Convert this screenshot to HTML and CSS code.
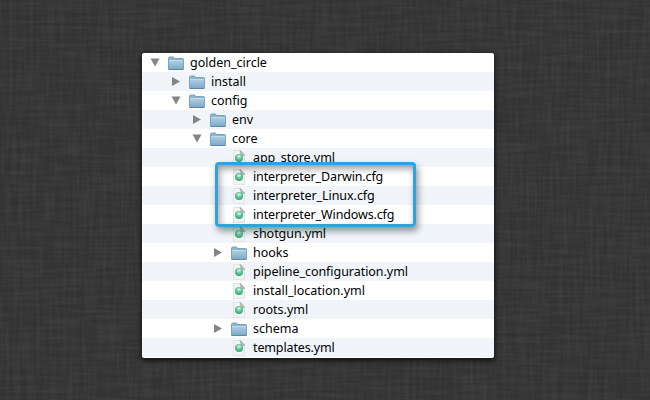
FILE: index.html
```html
<!DOCTYPE html>
<html lang="en">
<head>
<meta charset="utf-8">
<title>golden_circle</title>
<link rel="stylesheet" href="styles.css">
</head>
<body>
<svg class="linen" width="650" height="400" aria-hidden="true">
  <defs>
    <filter id="warp" x="0" y="0" width="100%" height="100%" color-interpolation-filters="sRGB">
      <feTurbulence type="fractalNoise" baseFrequency="0.3 0.022" numOctaves="2" seed="4"/>
      <feColorMatrix values="0 0 0 0 1  0 0 0 0 1  0 0 0 0 1  .08 0 0 0 -.027"/>
    </filter>
    <filter id="weft" x="0" y="0" width="100%" height="100%" color-interpolation-filters="sRGB">
      <feTurbulence type="fractalNoise" baseFrequency="0.022 0.3" numOctaves="2" seed="9"/>
      <feColorMatrix values="0 0 0 0 1  0 0 0 0 1  0 0 0 0 1  .08 0 0 0 -.027"/>
    </filter>
    <linearGradient id="blue" x1="0" y1="0" x2="0" y2="1"><stop offset="0" stop-color="#b4d0e2"/><stop offset="1" stop-color="#7cabca"/></linearGradient>
    <radialGradient id="green" cx=".5" cy=".35" r=".65"><stop offset="0" stop-color="#b5e6cb"/><stop offset=".5" stop-color="#62c79a"/><stop offset="1" stop-color="#2fa672"/></radialGradient>
    <symbol id="folder" viewBox="0 0 16 14">
      <path d="M.5 13V2.5Q.5 1 2 1H5Q6.2 1 6.5 2.5H14.5Q15.5 2.5 15.5 3.5V13Z" fill="#8bb4ce" stroke="#7ba3be"/>
      <path d="M1 4H15V13H1Z" fill="url(#blue)"/>
      <path d="M1 4.5H15" stroke="#c3dae8"/>
      <path d="M.5 13.5H15.5" stroke="#5b86a4"/>
    </symbol>
    <symbol id="file" viewBox="0 0 12 16">
      <path d="M.5.5H7.5L11.5 5V15.5H.5Z" fill="#f3f3f3" stroke="#e2e3e4"/>
      <path d="M6.5 0H7.5L12 5V6H8Z" fill="#b4b4b6"/>
      <circle cx="6" cy="7.9" r="4" fill="url(#green)"/>
      <ellipse cx="6" cy="6.4" rx="2.1" ry="1.2" fill="#fff" opacity=".4"/>
    </symbol>
    <symbol id="open" viewBox="0 0 10 9"><path d="M.5.5H9.5L5 8.5Z" fill="#858585"/></symbol>
    <symbol id="closed" viewBox="0 0 10 9"><path d="M1 0V9L9 4.5Z" fill="#858585"/></symbol>
  </defs>
  <rect width="650" height="400" filter="url(#warp)"/>
  <rect width="650" height="400" filter="url(#weft)"/>
</svg>
<main class="panel">
  <ul class="tree">
    <li class="row l0"><svg class="arrow"><use href="#open"/></svg><svg class="folder"><use href="#folder"/></svg><span>golden_circle</span></li>
    <li class="row l1"><svg class="arrow"><use href="#closed"/></svg><svg class="folder"><use href="#folder"/></svg><span>install</span></li>
    <li class="row l1"><svg class="arrow"><use href="#open"/></svg><svg class="folder"><use href="#folder"/></svg><span>config</span></li>
    <li class="row l2"><svg class="arrow"><use href="#closed"/></svg><svg class="folder"><use href="#folder"/></svg><span>env</span></li>
    <li class="row l2"><svg class="arrow"><use href="#open"/></svg><svg class="folder"><use href="#folder"/></svg><span>core</span></li>
    <li class="row leaf snug"><svg class="file"><use href="#file"/></svg><span>app_store.yml</span></li>
    <li class="row leaf tight"><svg class="file"><use href="#file"/></svg><span>interpreter_Darwin.cfg</span></li>
    <li class="row leaf snug"><svg class="file"><use href="#file"/></svg><span>interpreter_Linux.cfg</span></li>
    <li class="row leaf tight"><svg class="file"><use href="#file"/></svg><span>interpreter_Windows.cfg</span></li>
    <li class="row leaf snug"><svg class="file"><use href="#file"/></svg><span>shotgun.yml</span></li>
    <li class="row l3"><svg class="arrow"><use href="#closed"/></svg><svg class="folder"><use href="#folder"/></svg><span>hooks</span></li>
    <li class="row leaf snug"><svg class="file"><use href="#file"/></svg><span>pipeline_configuration.yml</span></li>
    <li class="row leaf"><svg class="file"><use href="#file"/></svg><span>install_location.yml</span></li>
    <li class="row leaf"><svg class="file"><use href="#file"/></svg><span>roots.yml</span></li>
    <li class="row l3"><svg class="arrow"><use href="#closed"/></svg><svg class="folder"><use href="#folder"/></svg><span>schema</span></li>
    <li class="row leaf tight"><svg class="file"><use href="#file"/></svg><span>templates.yml</span></li>
  </ul>
  <div class="highlight"></div>
</main>
</body>
</html>
```
FILE: styles.css
```css
body {
  margin: 0;
  height: 400px;
  overflow: hidden;
  background: #323232;
  font: 12.5px/19px "Noto Sans", sans-serif;
  color: #000;
}
.linen {
  position: absolute;
  inset: 0;
}
.panel {
  position: relative;
  box-sizing: border-box;
  width: 352px;
  height: 305px;
  margin: 53px 0 0 142px;
  background: #fff;
  border-radius: 2px;
  box-shadow: 0 2px 5px 1px rgba(0, 0, 0, .65);
}
.tree {
  margin: 0;
  padding: 0;
  list-style: none;
}
.row {
  display: flex;
  align-items: center;
  height: 19px;
  white-space: nowrap;
}
.row:nth-child(even) {
  background: #f1f5fa;
}
.l0 { padding-left: 8px; }
.l1 { padding-left: 29px; }
.l2 { padding-left: 50px; }
.l3 { padding-left: 71px; }
.leaf { padding-left: 91px; }
.snug { letter-spacing: -.05px; }
.tight { letter-spacing: -.13px; }
.arrow {
  width: 10px;
  height: 9px;
  margin-right: 8px;
}
.folder {
  width: 16px;
  height: 14px;
  margin-right: 6px;
}
.file {
  width: 12px;
  height: 16px;
  margin-right: 8px;
}
.highlight {
  position: absolute;
  box-sizing: border-box;
  left: 73px;
  top: 109px;
  width: 201px;
  height: 65px;
  border: 3px solid #2fa3e0;
  border-radius: 4px;
  box-shadow: 2px 4px 7px rgba(0, 0, 0, .42), inset 2px 4px 7px rgba(0, 0, 0, .36);
}
```
